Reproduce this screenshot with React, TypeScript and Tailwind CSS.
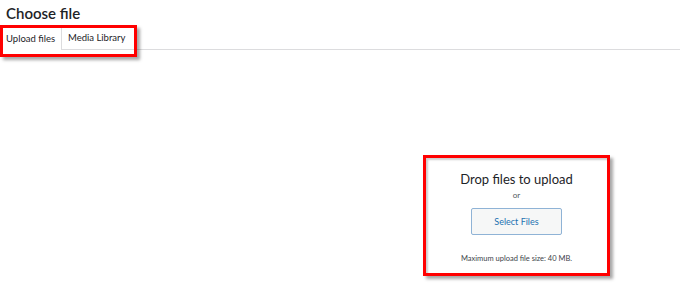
const App = () => {
  return (
    <div
      className="relative w-[680px] h-[297px] overflow-hidden bg-white text-[#1d2327]"
      style={{ fontFamily: 'Lato, "Open Sans", sans-serif' }}
    >
      <h1 className="pl-[6px] pt-[2px] text-[15px] leading-[22px] font-semibold">
        Choose file
      </h1>

      <div className="mt-[4px] flex h-[22px] border-b border-[#dcdcde]">
        <div className="flex w-[62px] items-center border-r border-[#dcdcde] bg-white pl-[6px] text-[9.5px] -mb-px">
          Upload files
        </div>
        <div className="flex items-center pl-[6px] text-[9.5px]">Media Library</div>
      </div>

      <div className="flex justify-end pr-[70px] pt-[106px]">
        <div className="flex h-[121px] w-[187px] flex-col items-center">
          <p className="mt-[14px] text-[13px] leading-[18px]">Drop files to upload</p>
          <p className="mt-[2px] text-[8px] leading-[10px] text-[#50575e]">or</p>
          <button className="mt-[8px] h-[27px] w-[91px] rounded-[2px] border border-[#8fb3d6] bg-[#f6f7f7] text-[9px] text-[#2271b1]">
            Select Files
          </button>
          <p className="mt-[19px] text-[7.5px] leading-[10px] text-[#3c434a]">
            Maximum upload file size: 40 MB.
          </p>
        </div>
      </div>

      {/* annotation boxes */}
      <div className="absolute left-0 top-[25px] h-[32px] w-[137px] border-[3px] border-[#ff0000] shadow-[3px_3px_3px_rgba(0,0,0,0.35)]" />
      <div className="absolute left-[423px] top-[155px] h-[121px] w-[187px] border-[3px] border-[#ff0000] shadow-[3px_3px_3px_rgba(0,0,0,0.35),inset_2px_2px_2px_rgba(0,0,0,0.2)]" />
    </div>
  );
};

export default App;
